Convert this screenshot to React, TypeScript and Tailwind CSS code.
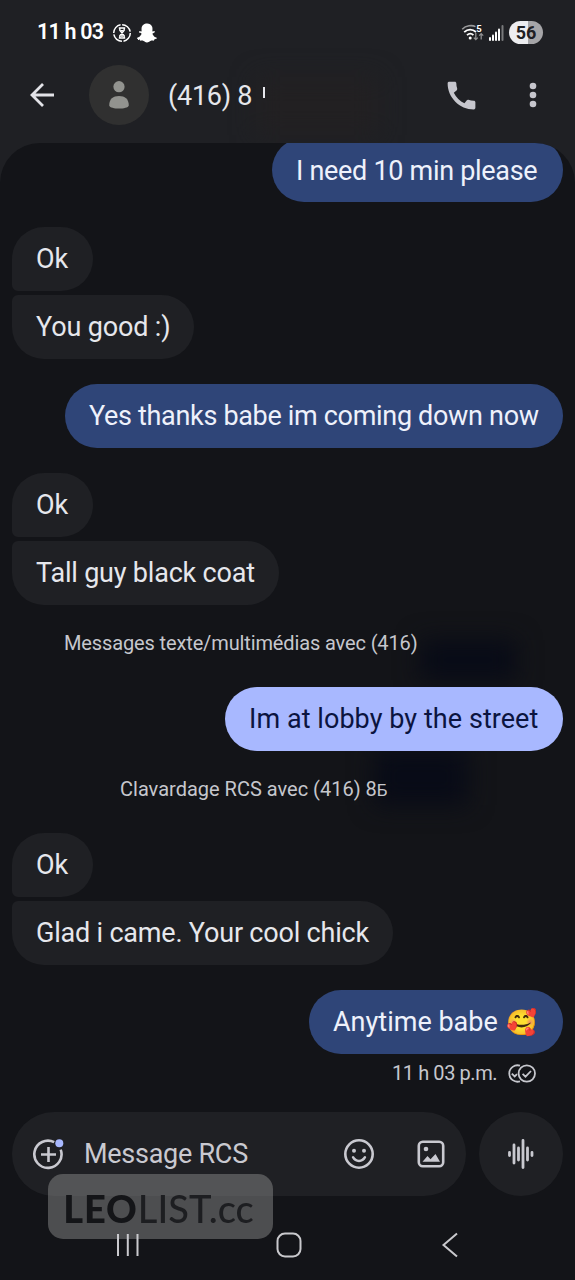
import type { ReactNode } from "react";
import clsx from "clsx";
import { FaSnapchatGhost } from "react-icons/fa";
import { MdCall } from "react-icons/md";

interface BubbleProps {
  side: "in" | "out";
  className: string;
  children: ReactNode;
}

function Bubble({ side, className, children }: BubbleProps) {
  return (
    <div
      className={clsx(
        "flex h-16 shrink-0 items-center whitespace-nowrap px-6 text-[27px] leading-none",
        side === "in"
          ? "self-start bg-[#1f2024] text-[#e6e7ec]"
          : "self-end rounded-[32px]",
        className
      )}
    >
      {children}
    </div>
  );
}

function StatusBar() {
  return (
    <div className="flex h-[65px] items-center justify-between pl-[37px] pr-8 text-white">
      <div className="flex items-center">
        <span className="w-[75px] whitespace-nowrap text-[21.5px] font-semibold tracking-[-0.8px]">
          11 h 03
        </span>
        <svg viewBox="0 0 20 20" className="size-5" fill="none" stroke="currentColor">
          <circle cx="10" cy="10" r="8.3" strokeWidth="1.5" strokeDasharray="11.4 1.6" />
          <path
            d="M6.8 5h6.4M6.8 15h6.4M7.8 5v2.3l4.4 5.4V15M12.2 5v2.3l-4.4 5.4V15"
            strokeWidth="1.4"
          />
          <path d="M8.3 13.8h3.4L10 11.6zM8.5 7h3L10 9z" fill="currentColor" stroke="none" />
        </svg>
        <FaSnapchatGhost className="ml-[5px] size-5" />
      </div>
      <div className="flex items-center">
        <svg viewBox="0 0 24 18" className="h-[18px] w-6" fill="none" stroke="currentColor">
          <path d="M1.2 5.2C5 1.4 11 .8 14.5 2.6" strokeWidth="1.6" opacity=".55" />
          <path d="M3.2 8.2C6.7 4.8 11.5 4.8 15 8M6 11.2c2.2-2 4.4-2 6.4-.1" strokeWidth="1.8" />
          <circle cx="9.2" cy="14" r="1.5" fill="currentColor" stroke="none" />
          <path d="M14.8 9v6.6m-2-2 2 2 2-2M20.2 15.5V9.6m-2 2 2-2 2 2" strokeWidth="1.3" opacity=".5" />
          <text x="15.2" y="7.6" fontSize="9.5" fontWeight="700" fill="currentColor" stroke="none">
            5
          </text>
        </svg>
        <svg viewBox="0 0 15 16" className="ml-1 h-4 w-[15px]" fill="currentColor">
          <rect x="0" y="12" width="2" height="4" rx="1" />
          <rect x="3" y="9.5" width="2" height="6.5" rx="1" />
          <rect x="6" y="6.5" width="2" height="9.5" rx="1" />
          <rect x="9" y="3.5" width="2" height="12.5" rx="1" />
          <rect x="12.5" y="0" width="2" height="16" rx="1" opacity=".4" />
        </svg>
        <div className="ml-[5px] flex h-[23px] w-[34px] items-center justify-center rounded-full bg-linear-to-r from-[#ededf0] from-56% to-[#a5a5a8] to-56% text-[18px] font-bold text-[#1f2024]">
          56
        </div>
      </div>
    </div>
  );
}

function Header() {
  return (
    <div className="relative flex h-[78px] items-start">
      <div className="absolute left-[256px] top-[12px] h-[58px] w-[122px] bg-[#222022] blur-md" />
      <div className="flex h-[60px] w-full items-center">
        <svg viewBox="0 0 24 24" className="ml-[30px] size-6" fill="none" stroke="#e3e3e8" strokeWidth="2.8">
          <path d="M24 12H2.500M13 1 2 12l11 11" />
        </svg>
        <div className="ml-[35px] flex size-[60px] items-center justify-center rounded-full bg-[#303030]">
          <svg viewBox="0 0 20 28" className="h-7 w-5" fill="#92938f">
            <circle cx="10" cy="5.7" r="5.6" />
            <path d="M.2 24.4C.2 18 4.2 15 10 15s9.8 3 9.8 9.4C18.6 28.6 1.4 28.6.2 24.4z" />
          </svg>
        </div>
        <h1 className="relative ml-[19px] flex-1 whitespace-nowrap pt-0.5 text-[27px] leading-none tracking-[-0.25px] text-[#e6e7ec]">
          (416) 8 <span className="ml-1 inline-block h-[11px] w-[2.5px] -translate-y-[7px] bg-[#e6e7ec]" />
        </h1>
        <MdCall className="mr-[49px] size-[37px] text-[#c6c6cd]" />
        <svg viewBox="0 0 8 26" className="mr-[38px] h-[26px] w-2" fill="#c6c6cd">
          <circle cx="4" cy="4" r="3.3" />
          <circle cx="4" cy="13" r="3.3" />
          <circle cx="4" cy="22" r="3.3" />
        </svg>
      </div>
    </div>
  );
}

function Conversation() {
  return (
    <div className="relative h-[969px] overflow-hidden rounded-t-[40px] bg-[#131418]">
      <div className="absolute left-[420px] top-[497px] h-[40px] w-[96px] bg-[#080b17] blur-md" />
      <div className="absolute left-[374px] top-[606px] h-[56px] w-[94px] bg-[#080b17] blur-md" />
      <div className="relative flex h-full flex-col px-3">
        <Bubble side="out" className="-mt-[5px] w-[291px] bg-[#2f4578] pt-0.5 tracking-[-0.3px] text-[#eef1fb]">
          I need 10 min please
        </Bubble>
        <Bubble side="in" className="mt-[25px] w-[81px] rounded-[32px] rounded-bl-[6px]">
          Ok
        </Bubble>
        <Bubble side="in" className="mt-1 w-[182px] rounded-[32px] rounded-tl-[6px] tracking-[-0.15px]">
          You good :)
        </Bubble>
        <Bubble side="out" className="mt-[25px] w-[498px] bg-[#2f4578] tracking-[-0.32px] text-[#eef1fb]">
          Yes thanks babe im coming down now
        </Bubble>
        <Bubble side="in" className="mt-[25px] w-[81px] rounded-[32px] rounded-bl-[6px]">
          Ok
        </Bubble>
        <Bubble side="in" className="mt-1 w-[267px] rounded-[32px] rounded-tl-[6px] tracking-[-0.2px]">
          Tall guy black coat
        </Bubble>
        <p className="mt-[25px] ml-[52px] h-[26px] whitespace-nowrap text-[20px] leading-[26px] tracking-[-0.13px] text-[#c6c7cd]">
          Messages texte/multimédias avec (416)
        </p>
        <Bubble side="out" className="mt-[31px] w-[338px] bg-[#a8b8ff] tracking-[0.06px] text-[#0b1440]">
          Im at lobby by the street
        </Bubble>
        <p className="mt-[25px] ml-[108px] h-[26px] whitespace-nowrap text-[20px] leading-[26px] text-[#c6c7cd]">
          Clavardage RCS avec (416) 8<span className="text-[17px]">Б</span>
        </p>
        <Bubble side="in" className="mt-[31px] w-[81px] rounded-[32px] rounded-bl-[6px]">
          Ok
        </Bubble>
        <Bubble side="in" className="mt-1 w-[381px] rounded-[32px] rounded-tl-[6px] tracking-[-0.2px]">
          Glad i came. Your cool chick
        </Bubble>
        <Bubble side="out" className="mt-[25px] w-[254px] bg-[#2f4578] text-[#eef1fb]">
          Anytime babe<span className="ml-2 text-[25px]">🥰</span>
        </Bubble>
        <div className="mt-1.5 mr-[27px] flex h-[26px] items-center self-end text-[20px] leading-none text-[#c6c7cd]">
          <span className="w-[115px] whitespace-nowrap tracking-[-0.42px]">11 h 03 p.m.</span>
          <svg viewBox="0 0 29 19" className="h-[19px] w-[29px]" fill="none" stroke="currentColor" strokeWidth="1.8">
            <path d="M13 1.7A8.200 8.200 0 1 0 13 17.300" />
            <circle cx="19.800" cy="9.500" r="8.200" />
            <path d="m4.800 9.600 2.900 2.900 2.300-2.300M15.600 9.800l2.900 2.900 5.500-5.700" />
          </svg>
        </div>
      </div>
    </div>
  );
}

function Composer() {
  return (
    <div className="flex h-[84px] gap-[13px] px-3">
      <div className="flex w-[454px] items-center rounded-full bg-[#1f2024] text-[#c9c9d0]">
        <svg viewBox="0 0 32 32" className="ml-5 size-8" fill="none" stroke="currentColor" strokeWidth="2.6">
          <path d="M22.200 4.200A13.600 13.600 0 1 0 28.700 11.600" />
          <path d="M16.500 9v15M9 16.500h15" />
          <circle cx="27.300" cy="5.300" r="4" fill="#a8b8ff" stroke="none" />
        </svg>
        <span className="ml-5 flex-1 whitespace-nowrap text-[27px] leading-none tracking-[-0.27px]">
          Message RCS
        </span>
        <svg viewBox="0 0 32 32" className="size-8" fill="none" stroke="currentColor" strokeWidth="2.6">
          <circle cx="16" cy="16" r="13.7" />
          <path d="M10 19.2c2.800 5 9.200 5 12 0" strokeWidth="2.4" strokeLinecap="round" />
          <circle cx="11" cy="12.700" r="2" fill="currentColor" stroke="none" />
          <circle cx="21" cy="12.700" r="2" fill="currentColor" stroke="none" />
        </svg>
        <svg viewBox="0 0 30 30" className="mr-5 ml-[41px] size-[30px]" fill="none" stroke="currentColor" strokeWidth="2.6">
          <rect x="2.800" y="2.800" width="24.400" height="24.400" rx="4" />
          <circle cx="10" cy="10" r="2.300" fill="currentColor" stroke="none" />
          <path d="m6.500 22.700 5-5.700 3 3.300 5-5.300 4.500 7.700z" fill="currentColor" stroke="none" />
        </svg>
      </div>
      <div className="flex size-[84px] items-center justify-center rounded-full bg-[#1f2024]">
        <svg viewBox="0 0 28 32" className="mr-px h-8 w-7" stroke="#c9c9d0" strokeWidth="2.800" strokeLinecap="round">
          <path d="M2.500 14.500v3M7 7v18M11.500 10v12M16 2.500v27M20.500 10v12M25 14.500v3" />
        </svg>
      </div>
    </div>
  );
}

function NavBar() {
  return (
    <div className="relative h-[84px] pt-[14px] text-[#c9c9cd]">
      <div className="absolute left-12 top-[-22px] flex h-[65px] w-[225px] items-center justify-center rounded-[15px] bg-[#888]/50 pt-0.5 pr-1 blur-[0.7px]">
        <span className="whitespace-nowrap font-[Lato] text-[38px] leading-none font-medium text-[#1d1e21]">
          <span className="font-black tracking-[0.9px] text-[#141518]">LEO</span>LIST.cc
        </span>
      </div>
      <div className="relative flex h-full items-center">
        <svg viewBox="0 0 24 24" className="ml-[116px] size-6" stroke="currentColor" strokeWidth="2">
          <path d="M2 1v22M11.800 1v22M21.500 1v22" />
        </svg>
        <svg viewBox="0 0 26 26" className="ml-[136px] size-[26px]" fill="none" stroke="currentColor" strokeWidth="2">
          <rect x="1.500" y="1.500" width="23" height="23" rx="7.500" />
        </svg>
        <svg viewBox="0 0 18 26" className="ml-[139px] h-[26px] w-[18px]" fill="none" stroke="currentColor" strokeWidth="2">
          <path d="M16 1.500 2.500 13 16 24.500" />
        </svg>
      </div>
    </div>
  );
}

export default function App() {
  return (
    <div className="h-[1280px] w-[575px] overflow-hidden bg-[#1f2024] font-[Roboto,sans-serif]">
      <StatusBar />
      <Header />
      <Conversation />
      <div className="bg-[#131418]">
        <Composer />
        <NavBar />
      </div>
    </div>
  );
}
